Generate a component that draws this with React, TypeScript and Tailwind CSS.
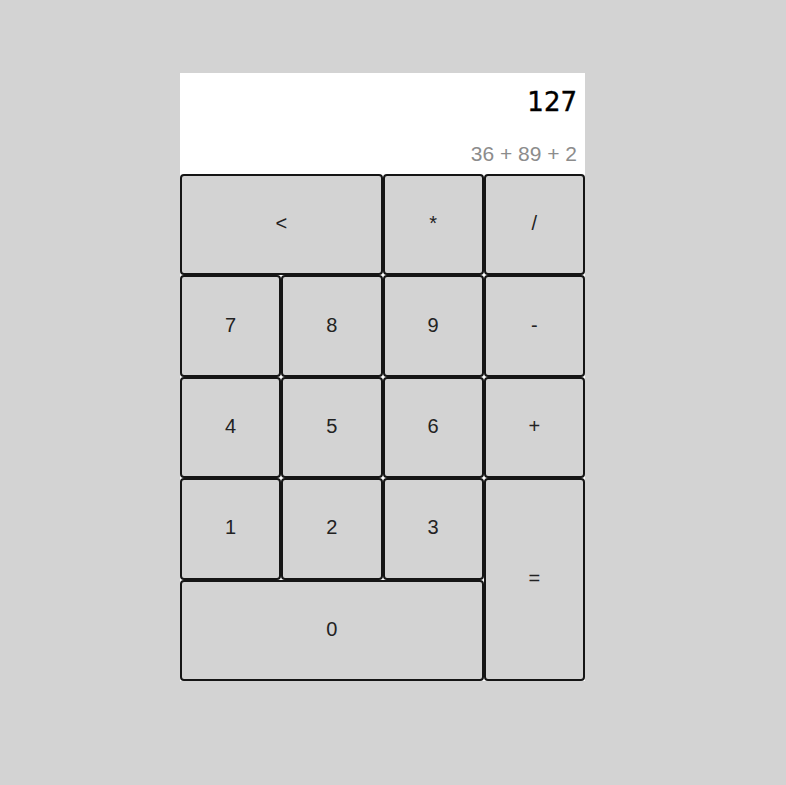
const keys: { label: string; cls?: string }[] = [
  { label: '<', cls: 'col-span-2' },
  { label: '*' },
  { label: '/' },
  { label: '7' },
  { label: '8' },
  { label: '9' },
  { label: '-' },
  { label: '4' },
  { label: '5' },
  { label: '6' },
  { label: '+' },
  { label: '1' },
  { label: '2' },
  { label: '3' },
  { label: '=', cls: 'row-span-2' },
  { label: '0', cls: 'col-span-3' },
];

export default function App() {
  return (
    <div className="min-h-[785px] w-full bg-[#d3d3d3] pt-[73px] pl-[180px]">
      <div className="w-[405px]">
        {/* Display */}
        <div className="flex h-[101px] flex-col items-end justify-between bg-white px-2 pt-[14px] pb-[8px]">
          <div className="text-[26px] leading-[30px] text-black [font-family:'DejaVu_Sans',sans-serif] [-webkit-text-stroke:0.4px_black]">
            127
          </div>
          <div className="text-[21px] leading-[24px] text-[#8c8c8c] [font-family:'Liberation_Sans',Arial,sans-serif]">
            36 + 89 + 2
          </div>
        </div>

        {/* Keypad */}
        <div className="grid grid-cols-4 auto-rows-[101.4px] bg-white">
          {keys.map((k) => (
            <button
              key={k.label}
              className={`${k.cls ?? ''} flex items-center justify-center rounded-[4px] border-2 border-[#151515] bg-[#d3d3d3] pb-[3px] text-[20px] text-[#222] [font-family:'Liberation_Sans',Arial,sans-serif]`}
            >
              {k.label}
            </button>
          ))}
        </div>
      </div>
    </div>
  );
}
